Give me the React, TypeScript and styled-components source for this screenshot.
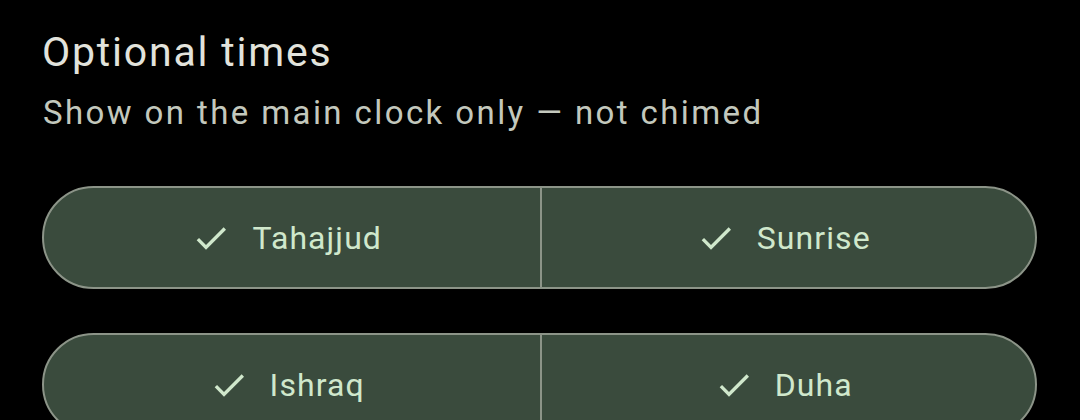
import React from "react";
import styled, { createGlobalStyle } from "styled-components";

const Global = createGlobalStyle`
  html, body { margin: 0; padding: 0; background: #000; }
  body { font-family: Roboto, "Noto Sans", sans-serif; overflow: hidden; }
`;

const Page = styled.div`
  width: 1080px;
  height: 420px;
  box-sizing: border-box;
  padding: 29px 43px 0 42px;
  background: #000;
  overflow: hidden;
`;

const Title = styled.h1`
  margin: 0;
  font-size: 41px;
  font-weight: 400;
  line-height: 47px;
  color: #e2e3dc;
  letter-spacing: 1.8px;
`;

const Subtitle = styled.p`
  margin: 18px 0 0 1px;
  font-size: 33px;
  font-weight: 400;
  line-height: 38px;
  color: #c3c8bd;
  letter-spacing: 2.4px;
`;

const Groups = styled.div`
  margin-top: 54px;
  display: flex;
  flex-direction: column;
  gap: 44px;
`;

const Group = styled.div`
  display: grid;
  grid-template-columns: 1fr 1fr;
  height: 103px;
  box-sizing: border-box;
  border: 2px solid #8c9488;
  border-radius: 999px;
  background: #3a4b3d;
  overflow: hidden;
`;

const Segment = styled.button<{ $first?: boolean }>`
  all: unset;
  display: flex;
  align-items: center;
  justify-content: center;
  gap: 21px;
  padding-right: 10px;
  border-left: ${(p) => (p.$first ? "none" : "2px solid #8c9488")};
  color: #d0e8cc;
  font-family: Roboto, "Noto Sans", sans-serif;
  font-size: 32px;
  font-weight: 400;
  letter-spacing: 1.1px;
  cursor: pointer;
`;

const Check = () => (
  <svg width="40" height="40" viewBox="0 0 24 24" aria-hidden="true">
    <path
      fill="#d0e8cc"
      d="M9 16.17L4.83 12l-1.42 1.41L9 19 21 7l-1.41-1.41z"
    />
  </svg>
);

const rows: [string, string][] = [
  ["Tahajjud", "Sunrise"],
  ["Ishraq", "Duha"],
];

export default function App() {
  return (
    <>
      <Global />
      <Page>
        <Title>Optional times</Title>
        <Subtitle>Show on the main clock only — not chimed</Subtitle>
        <Groups>
          {rows.map(([a, b]) => (
            <Group key={a}>
              <Segment $first>
                <Check />
                {a}
              </Segment>
              <Segment>
                <Check />
                {b}
              </Segment>
            </Group>
          ))}
        </Groups>
      </Page>
    </>
  );
}
